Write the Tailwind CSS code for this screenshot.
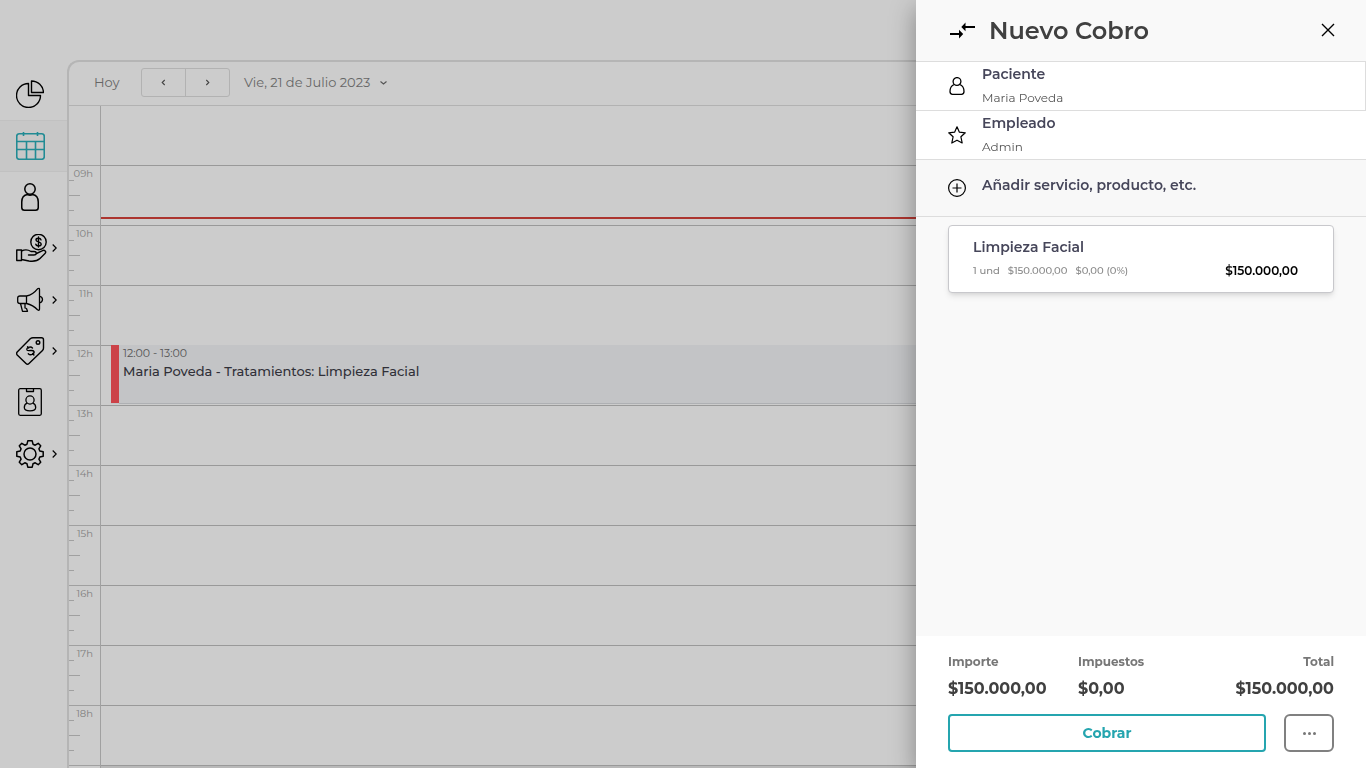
<!DOCTYPE html>
<html lang="es">
<head>
<meta charset="utf-8">
<meta name="viewport" content="width=device-width, initial-scale=1">
<title>Nuevo Cobro</title>
<script src="https://cdn.jsdelivr.net/npm/@tailwindcss/browser@4"></script>
</head>
<body class="flex h-screen overflow-hidden bg-[#cccccc] font-['Montserrat','Inter',sans-serif] text-[#333333]">

<nav aria-label="Principal" class="w-[67px] shrink-0 pt-[68px] text-black">
  <ul>
    <li><a href="#" aria-label="Resumen" class="flex h-[52px] items-center pl-4">
      <svg class="size-7" viewBox="0 0 28 28" fill="none" stroke="currentColor" stroke-width="1.4" stroke-linejoin="round"><path d="M12.500 3.500A12 12 0 1 0 24.500 15.500H12.500z"/><path d="M15.500 1A12 12 0 0 1 27.500 12.500H15.500z"/></svg></a></li>
    <li><a href="#" aria-label="Agenda" class="flex h-[52px] items-center border-y border-[#c1c1c1] bg-[#c7c7c7] pl-4 text-[#218b94]">
      <svg class="h-7 w-[29px]" viewBox="0 0 29 28" fill="none" stroke="currentColor" stroke-width="1.6"><rect x=".75" y="1.750" width="27.500" height="25.500" rx="2.500"/><path d="M1 9.500h27M1 17.500h27M10.500 9.500v18M19.500 9.500v18M7.500 0v4M21.500 0v4"/></svg></a></li>
    <li><a href="#" aria-label="Pacientes" class="flex h-[50px] items-center pl-4">
      <svg class="size-7" viewBox="0 0 28 28" fill="none" stroke="currentColor" stroke-width="1.5"><circle cx="14" cy="6" r="5.200"/><path d="M11.500 11.500C8 12 5.750 15 5.750 19V24.500Q5.750 27.250 8.500 27.250H19.500Q22.250 27.250 22.250 24.500V19C22.250 15 20 12 16.500 11.500Q14 12.800 11.500 11.500z"/></svg></a></li>
    <li><a href="#" aria-label="Caja" class="flex h-[52px] items-center gap-1 pl-4">
      <svg class="h-7 w-8" viewBox="0 0 32 28" fill="none" stroke="currentColor" stroke-width="1.4" stroke-linejoin="round" stroke-linecap="round"><circle cx="22.500" cy="8" r="7.700"/><path d="M25 5.800C24.500 3.800 20 3.700 20 6 20 8.300 25.200 7.600 25.200 10 25.200 12.500 20.200 12.500 19.800 10.200M22.500 3v10M.75 16H5.500V26.500H.75zM5.500 17C9 15.300 12 15.500 15 17.500H18C21 17.500 21 21 18 21H12.500M20.500 19.500L26 16.800C28.500 15.500 31 17.500 29 19.500L24 24.500C21 27.500 17 27.500 13 27L5.500 25.500"/></svg>
      <svg class="h-2 w-[5px]" viewBox="0 0 5 8" fill="none" stroke="currentColor" stroke-width="1.200"><path d="M.7.500L4.200 4 .7 7.500"/></svg></a></li>
    <li><a href="#" aria-label="Marketing" class="flex h-[51px] items-center gap-1 pl-4">
      <svg class="h-7 w-8" viewBox="0 0 32 28" fill="none" stroke="currentColor" stroke-width="1.3" stroke-linejoin="round" stroke-linecap="round"><path d="M10.500 10H4Q1.700 10 1.700 12V15.500Q1.700 17.500 4 17.500H10.500zM10.500 10C15 9 19 6 21.500 2.800Q23.500 1.500 23.500 3.500V23Q23.500 25 21.500 23.800C19 21 15 18.500 10.500 17.500M23.500 10Q26.500 11 26.500 13.500T23.500 17M4.500 17.500L6.500 25.300H11.500L10.500 22.500 9 22V17.500"/></svg>
      <svg class="h-2 w-[5px]" viewBox="0 0 5 8" fill="none" stroke="currentColor" stroke-width="1.200"><path d="M.7.500L4.200 4 .7 7.500"/></svg></a></li>
    <li><a href="#" aria-label="Ofertas" class="flex h-[51px] items-center gap-1 pl-4">
      <svg class="h-7 w-8" viewBox="0 0 32 28" fill="none" stroke="currentColor" stroke-width="1.4" stroke-linejoin="round" stroke-linecap="round"><path d="M14.500 1.500Q15.500.700 17 .700H25.500Q27.500.700 27.500 2.700V11Q27.500 12.500 26.500 13.500L13 26.500Q11.500 28 10 26.500L1.200 18Q0 16.500 1.200 15z"/><circle cx="22" cy="5.500" r="1.800"/><path d="M16.500 11C14.500 9 10 10.500 11 13 12.200 15 16.500 12 17.900 14.300 18.900 17 14.500 19 12.300 16.700M11.600 9.800L12.700 11M16.700 16.500L17.900 18"/></svg>
      <svg class="h-2 w-[5px]" viewBox="0 0 5 8" fill="none" stroke="currentColor" stroke-width="1.200"><path d="M.7.500L4.200 4 .7 7.500"/></svg></a></li>
    <li><a href="#" aria-label="Empleados" class="flex h-[52px] items-center pl-4">
      <svg class="size-7" viewBox="0 0 28 28" fill="none" stroke="currentColor" stroke-width="1.3" stroke-linejoin="round"><rect x="2.700" y=".7" width="22.600" height="26.600" rx="1.500"/><path d="M10.500 1V3.500H17.500V1"/><circle cx="14" cy="12" r="4.100"/><path d="M11.200 15.200C9 16 8.300 17.500 8.300 19.500 8.300 22 10 22.800 14 22.800S19.700 22 19.700 19.500C19.700 17.500 19 16 16.800 15.200"/></svg></a></li>
    <li><a href="#" aria-label="Ajustes" class="flex h-[51px] items-center gap-1 pl-4">
      <svg class="h-7 w-8" viewBox="0 0 32 28" fill="none" stroke="currentColor" stroke-width="1.500" stroke-linejoin="round"><circle cx="14" cy="14" r="6"/><path d="M11.800.800H16.200L17 4.200 19.200 5.200 22.200 3.300 24.700 5.800 22.900 8.800 23.800 11 27.200 11.800V16.200L23.800 17 22.900 19.200 24.700 22.200 22.200 24.700 19.200 22.800 17 23.800 16.200 27.200H11.800L11 23.800 8.800 22.800 5.800 24.700 3.300 22.200 5.100 19.200 4.200 17 .800 16.200V11.800L4.200 11 5.100 8.800 3.300 5.800 5.800 3.300 8.800 5.200 11 4.200z"/></svg>
      <svg class="h-2 w-[5px]" viewBox="0 0 5 8" fill="none" stroke="currentColor" stroke-width="1.200"><path d="M.7.500L4.200 4 .7 7.500"/></svg></a></li>
  </ul>
</nav>

<main class="mt-[60px] flex min-w-0 flex-1 flex-col overflow-hidden rounded-tl-xl border-t-2 border-l-2 border-[#b5b5b5]">
  <header class="flex h-11 shrink-0 items-center border-b border-[#b2b2b2] pb-[2px] pl-[25px] text-[13px] text-[#666666]">
    <button type="button" class="w-[27px] text-left">Hoy</button>
    <div class="ml-5 flex h-[29px] w-[89px] divide-x divide-[#b2b2b2] rounded-[3px] border border-[#b2b2b2]">
      <button type="button" aria-label="Día anterior" class="flex flex-1 items-center justify-center"><svg class="h-[7px] w-[5px]" viewBox="0 0 5 7" fill="none" stroke="#444" stroke-width="1.100"><path d="M3.700 1L1.200 3.500l2.500 2.500"/></svg></button>
      <button type="button" aria-label="Día siguiente" class="flex flex-1 items-center justify-center"><svg class="h-[7px] w-[5px]" viewBox="0 0 5 7" fill="none" stroke="#444" stroke-width="1.100"><path d="M1.300 1l2.500 2.500-2.500 2.500"/></svg></button>
    </div>
    <button type="button" class="ml-[14px] flex items-center gap-[10px]">Vie, 21 de Julio 2023
      <svg class="h-1 w-[7px]" viewBox="0 0 7 4" fill="none" stroke="#555" stroke-width="1.100"><path d="M.5.500l3 2.500 3-2.500"/></svg></button>
  </header>
  <div class="flex h-[59px] shrink-0"><div class="w-8 border-r border-[#a0a0a0]"></div></div>
  <div id="hours"></div>
</main>

<template id="hour">
  <div class="flex h-[60px]">
    <div class="relative w-8 shrink-0 border-t border-r border-[#a0a0a0] pr-[7px] text-right text-[10px] leading-[15px] text-[#808080]">
      <span></span>
      <i class="absolute top-[14px] left-0 w-[5px] border-t border-[#a0a0a0]"></i>
      <i class="absolute top-[29px] left-0 w-[11px] border-t border-[#a0a0a0]"></i>
      <i class="absolute top-[44px] left-0 w-[5px] border-t border-[#a0a0a0]"></i>
    </div>
    <div data-slot class="relative flex-1 border-t border-[#999999]"></div>
  </div>
</template>
<template id="now"><div class="absolute inset-x-0 top-[51px] h-[2px] bg-[#ac352f]"></div></template>
<template id="event">
  <article class="absolute -top-px right-0 left-[10px] flex h-[59px] bg-[#c3c4c6]">
    <div class="mb-px w-2 bg-[#cc4248]"></div>
    <div class="flex-1 border-b border-[#aeb0b3] pl-1">
      <p class="text-[11px] leading-4 text-[#555555]">12:00 - 13:00</p>
      <h2 class="text-[13px] leading-5 font-medium text-[#303038]">Maria Poveda - Tratamientos: Limpieza Facial</h2>
    </div>
  </article>
</template>

<aside role="dialog" aria-labelledby="title" class="fixed inset-y-0 right-0 flex w-[450px] flex-col bg-[#f9f9f9] shadow-[0_8px_24px_rgba(0,0,0,0.35)]">
  <header class="flex h-[61px] shrink-0 items-center px-8">
    <svg class="h-6 w-[27px]" viewBox="0 0 27 24" fill="#000"><path d="M11 10.800l4.200 4.300L11 19.400v-3.300H2v-2h9zM17.500 3.600v3.300H27v2h-9.500v3.300l-4.200-4.300z"/></svg>
    <h1 id="title" class="ml-[14px] flex-1 text-2xl font-semibold text-[#404040]">Nuevo Cobro</h1>
    <button type="button" aria-label="Cerrar" class="-mr-px pb-[2px]"><svg class="size-[14px]" viewBox="0 0 14 14" fill="none" stroke="#000" stroke-width="1.400"><path d="M1 1l12 12M13 1L1 13"/></svg></button>
  </header>
  <button type="button" class="flex h-[49px] shrink-0 items-center border-t border-r border-[#dddddd] bg-white pl-8 text-left">
    <svg class="h-[18px] w-[18px]" viewBox="0 0 18 18" fill="none" stroke="#000" stroke-width="1.300"><circle cx="9" cy="4.500" r="3.900"/><path d="M6.300 7.500C3.500 8.500 2 11.500 2 14.500Q2 17.300 4.500 17.300H13.500Q16 17.300 16 14.500C16 11.500 14.500 8.500 11.700 7.500"/></svg>
    <span class="ml-4 flex flex-col"><span class="text-sm leading-6 font-semibold text-[#46465a]">Paciente</span><span class="text-xs leading-6 text-[#555555]">Maria Poveda</span></span>
  </button>
  <button type="button" class="flex h-[49px] shrink-0 items-center border-t border-[#dddddd] bg-white pl-8 text-left">
    <svg class="h-[18px] w-[18px]" viewBox="0 0 18 18" fill="none" stroke="#000" stroke-width="1.200" stroke-linejoin="round"><path d="M9 .8l2.400 5.400 5.900.6-4.400 4 1.300 6.200L9 14.200l-5.200 2.800 1.300-6.200-4.400-4 5.900-.6z"/></svg>
    <span class="ml-4 flex flex-col"><span class="text-sm leading-6 font-semibold text-[#46465a]">Empleado</span><span class="text-xs leading-6 text-[#555555]">Admin</span></span>
  </button>
  <button type="button" class="flex h-[58px] shrink-0 items-center border-y border-[#dddddd] bg-[#f8f8f8] pl-8 text-left">
    <svg class="h-[18px] w-[18px]" viewBox="0 0 18 18" fill="none" stroke="#000" stroke-width="1.200"><circle cx="9" cy="9" r="8.400"/><path d="M9 4.500v9M4.500 9h9"/></svg>
    <span class="ml-4 pb-[6px] text-sm font-semibold text-[#46465a]">Añadir servicio, producto, etc.</span>
  </button>
  <div class="flex-1 px-8 pt-2">
    <article class="h-[68px] rounded-[4px] border border-[#c8c8cc] bg-white pt-[9px] pr-[35px] pl-6 shadow-md">
      <h2 class="text-sm leading-6 font-semibold text-[#46465a]">Limpieza Facial</h2>
      <div class="flex items-center justify-between leading-6">
        <p class="flex gap-2 text-[10px] font-medium text-[#888888]"><span>1 und</span><span>$150.000,00</span><span>$0,00 (0%)</span></p>
        <strong class="text-xs leading-6 font-semibold text-black">$150.000,00</strong>
      </div>
    </article>
  </div>
  <footer class="h-[132px] shrink-0 bg-white px-8 pt-4">
    <dl class="grid grid-cols-[130px_1fr_1fr] text-base leading-7 font-bold text-[#404040]">
      <div><dt class="text-xs leading-5 font-bold text-[#777777]">Importe</dt><dd class="pt-[3px]">$150.000,00</dd></div>
      <div><dt class="text-xs leading-5 font-bold text-[#777777]">Impuestos</dt><dd class="pt-[3px]">$0,00</dd></div>
      <div class="text-right"><dt class="text-xs leading-5 font-bold text-[#777777]">Total</dt><dd class="pt-[3px]">$150.000,00</dd></div>
    </dl>
    <div class="mt-[11px] flex h-[38px] gap-[18px]">
      <button type="button" class="flex-1 rounded-[4px] border-2 border-[#25a5af] text-sm font-bold text-[#25a5af]">Cobrar</button>
      <button type="button" aria-label="Más opciones" class="flex w-[50px] items-center justify-center rounded-md border-2 border-[#808080]"><svg class="h-[3px] w-[13px]" viewBox="0 0 13 3" fill="#777"><circle cx="1.500" cy="1.500" r="1.500"/><circle cx="6.500" cy="1.500" r="1.500"/><circle cx="11.500" cy="1.500" r="1.500"/></svg></button>
    </div>
  </footer>
</aside>

<script>
const list = document.getElementById('hours');
const clone = id => document.getElementById(id).content.cloneNode(true);
for (let h = 9; h <= 19; h++) {
  const row = clone('hour');
  const slot = row.querySelector('[data-slot]');
  if (h < 19) row.querySelector('span').textContent = String(h).padStart(2, '0') + 'h';
  else slot.classList.add('bg-[#b8b8b8]');
  if (h === 9) slot.append(clone('now'));
  if (h === 12) slot.append(clone('event'));
  list.append(row);
}
</script>
</body>
</html>
